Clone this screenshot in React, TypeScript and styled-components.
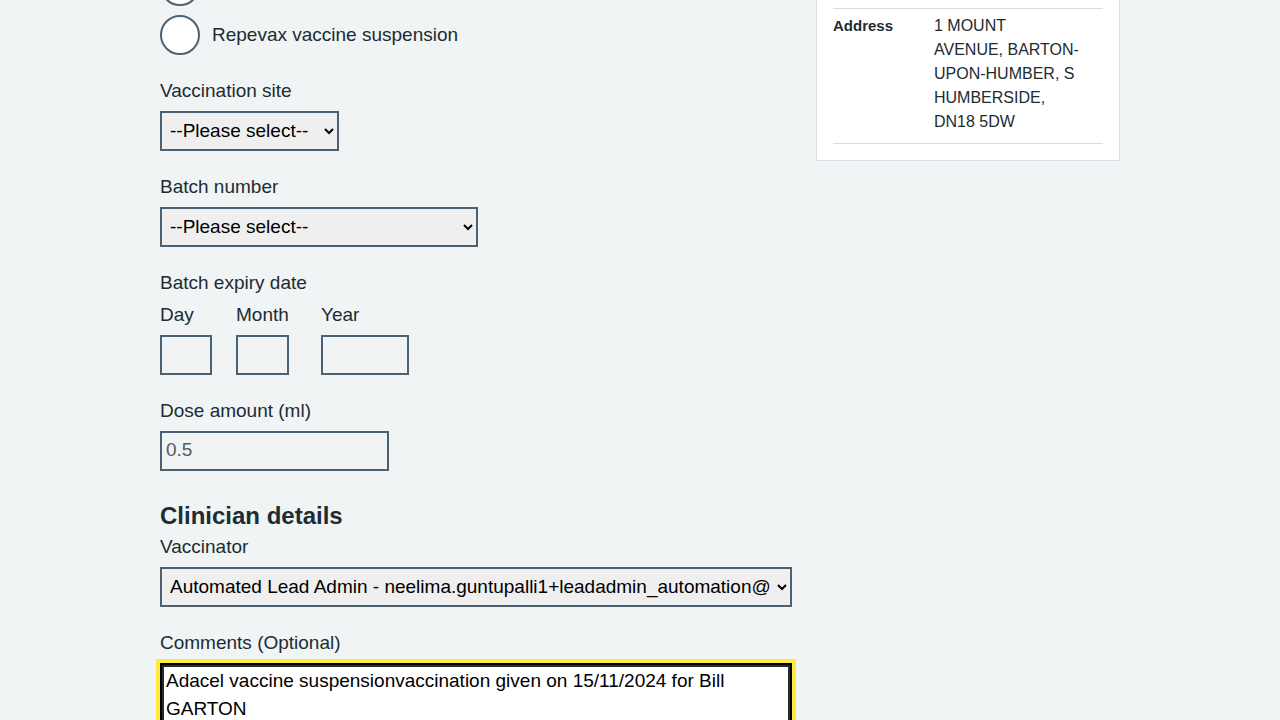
import styled, { createGlobalStyle } from 'styled-components';

const GlobalStyle = createGlobalStyle`
  html, body {
    margin: 0;
    padding: 0;
    background: #f0f4f5;
    color: #212b32;
    font-family: "Liberation Sans", Arial, sans-serif;
  }
  body {
    height: 720px;
    overflow: hidden;
  }
`;

// the page is scrolled: the top of the layout sits above the viewport
const Layout = styled.div`
  width: 960px;
  margin: -125px auto 0;
  display: grid;
  grid-template-columns: 632px 304px;
  column-gap: 24px;
  align-items: start;
`;

const MainColumn = styled.main`
  padding-top: 91px;
`;

const FormGroup = styled.div<{ $space?: number }>`
  margin-bottom: ${p => p.$space ?? 22}px;
`;

const RadioList = styled.div`
  display: flex;
  flex-direction: column;
  gap: 9px;
`;

const RadioItem = styled.label`
  display: flex;
  align-items: center;
  gap: 12px;
  font-size: 19px;
  line-height: 28px;
  cursor: pointer;
`;

const RadioCircle = styled.span`
  width: 40px;
  height: 40px;
  box-sizing: border-box;
  border: 2px solid #4c6272;
  border-radius: 50%;
  background: #fff;
  flex-shrink: 0;
`;

const Label = styled.label`
  display: block;
  font-size: 19px;
  line-height: 28px;
  margin-bottom: 6px;
`;

const Legend = styled.div`
  font-size: 19px;
  line-height: 28px;
  margin-bottom: 4px;
`;

const Select = styled.select<{ $width?: string }>`
  display: block;
  box-sizing: border-box;
  height: 40px;
  width: ${p => p.$width ?? 'auto'};
  max-width: 100%;
  border: 2px solid #4c6272;
  border-radius: 0;
  background-color: #efefef;
  color: #000;
  font-family: inherit;
  font-size: 19px;
  padding: 0 4px 2px;
`;

const DateRow = styled.div`
  display: flex;
  gap: 24px;
`;

const DateItem = styled.div<{ $minWidth: number }>`
  display: flex;
  flex-direction: column;
  align-items: flex-start;
  min-width: ${p => p.$minWidth}px;
`;

const TextInput = styled.input<{ $width: number }>`
  box-sizing: border-box;
  height: 40px;
  width: ${p => p.$width}px;
  border: 2px solid #4c6272;
  border-radius: 0;
  background: transparent;
  color: #212b32;
  font-family: inherit;
  font-size: 19px;
  padding: 0 4px 2px;
  &:disabled {
    color: #555b60;
  }
`;

const Heading = styled.h2`
  margin: 0 0 1px;
  font-size: 24px;
  line-height: 32px;
  font-weight: 700;
`;

const TextArea = styled.textarea`
  display: block;
  box-sizing: border-box;
  width: 632px;
  height: 120px;
  border: 2px solid #000;
  border-radius: 0;
  outline: 4px solid #ffeb3b;
  box-shadow: inset 0 0 0 2px #212b32;
  background: #fff;
  color: #000;
  font-family: inherit;
  font-size: 19px;
  line-height: 28px;
  padding: 2px 4px;
  resize: none;
`;

const Card = styled.aside`
  box-sizing: border-box;
  background: #fff;
  border: 1px solid #d8dde0;
  padding: 16px;
`;

const SummaryList = styled.dl`
  margin: 0;
`;

const SummaryRow = styled.div`
  display: grid;
  grid-template-columns: 101px 1fr;
  padding: 5px 0 9px;
  border-bottom: 1px solid #d8dde0;
  font-size: 16px;
  line-height: 24px;
`;

const Key = styled.dt`
  margin: 0;
  font-weight: 700;
  font-size: 15px;
`;

const Value = styled.dd`
  margin: 0;
`;

const Line = styled.span`
  display: block;
`;

const details = [
  { key: 'Name', lines: ['Bill GARTON'] },
  { key: 'NHS number', lines: ['943 476 5870'] },
  { key: 'Date of birth', lines: ['22/05/1945'] },
  {
    key: 'Address',
    lines: ['1 MOUNT', 'AVENUE, BARTON-', 'UPON-HUMBER, S', 'HUMBERSIDE,', 'DN18 5DW'],
  },
];

export default function App() {
  return (
    <>
      <GlobalStyle />
      <Layout>
        <MainColumn>
          <FormGroup>
            <RadioList>
              <RadioItem>
                <RadioCircle />
                Adacel vaccine suspension
              </RadioItem>
              <RadioItem>
                <RadioCircle />
                Repevax vaccine suspension
              </RadioItem>
            </RadioList>
          </FormGroup>

          <FormGroup>
            <Label htmlFor="site">Vaccination site</Label>
            <Select id="site" $width="179px" defaultValue="">
              <option value="">--Please select--</option>
              <option>Left upper arm</option>
              <option>Right upper arm</option>
            </Select>
          </FormGroup>

          <FormGroup>
            <Label htmlFor="batch">Batch number</Label>
            <Select id="batch" $width="318px" defaultValue="">
              <option value="">--Please select--</option>
            </Select>
          </FormGroup>

          <FormGroup>
            <Legend>Batch expiry date</Legend>
            <DateRow>
              <DateItem $minWidth={52}>
                <Label htmlFor="day">Day</Label>
                <TextInput id="day" $width={52} />
              </DateItem>
              <DateItem $minWidth={61}>
                <Label htmlFor="month">Month</Label>
                <TextInput id="month" $width={53} />
              </DateItem>
              <DateItem $minWidth={88}>
                <Label htmlFor="year">Year</Label>
                <TextInput id="year" $width={88} />
              </DateItem>
            </DateRow>
          </FormGroup>

          <FormGroup $space={29}>
            <Label htmlFor="dose">Dose amount (ml)</Label>
            <TextInput id="dose" $width={229} defaultValue="0.5" disabled />
          </FormGroup>

          <Heading>Clinician details</Heading>
          <FormGroup>
            <Label htmlFor="vaccinator">Vaccinator</Label>
            <Select id="vaccinator" $width="632px" defaultValue="lead">
              <option value="lead">
                Automated Lead Admin - neelima.guntupalli1+leadadmin_automation@nhs.net
              </option>
            </Select>
          </FormGroup>

          <FormGroup>
            <Label htmlFor="comments">Comments (Optional)</Label>
            <TextArea
              id="comments"
              defaultValue="Adacel vaccine suspensionvaccination given on 15/11/2024 for Bill GARTON"
            />
          </FormGroup>
        </MainColumn>

        <Card>
          <SummaryList>
            {details.map(d => (
              <SummaryRow key={d.key}>
                <Key>{d.key}</Key>
                <Value>
                  {d.lines.map(line => (
                    <Line key={line}>{line}</Line>
                  ))}
                </Value>
              </SummaryRow>
            ))}
          </SummaryList>
        </Card>
      </Layout>
    </>
  );
}
